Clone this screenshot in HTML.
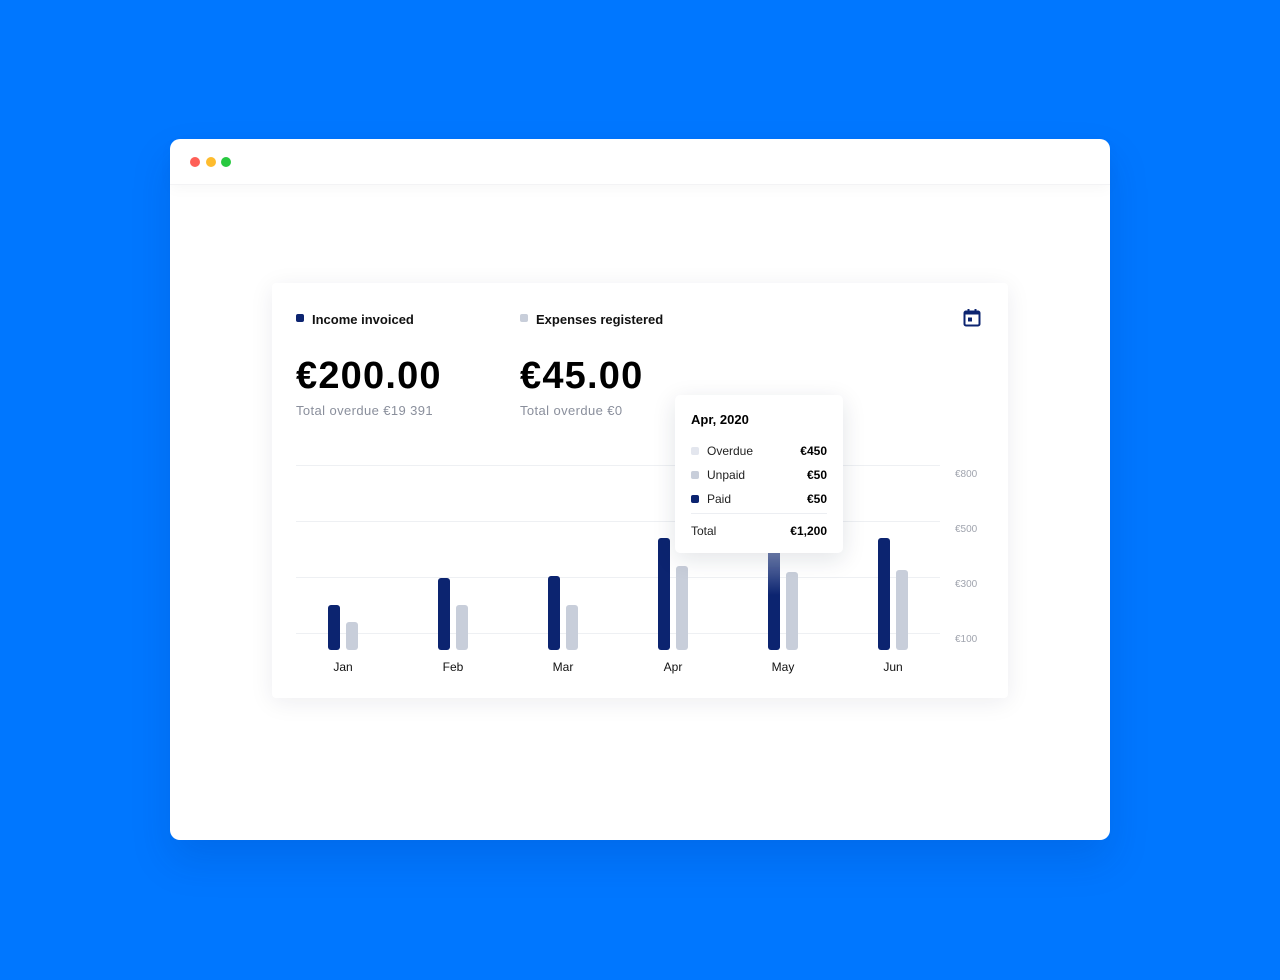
<!DOCTYPE html>
<html><head><style>
*{margin:0;padding:0;box-sizing:border-box}
body{width:1280px;height:980px;background:#0077ff;font-family:"Liberation Sans",sans-serif;position:relative;overflow:hidden}
.win{position:absolute;left:170px;top:139px;width:940px;height:701px;background:#fff;border-radius:10px;box-shadow:0 20px 40px rgba(0,40,120,.15)}
.hdr{position:absolute;left:0;top:0;width:940px;height:46px;border-bottom:1px solid #f3f3f5;box-shadow:0 4px 14px rgba(0,0,0,.03);border-radius:10px 10px 0 0}
.dot{position:absolute;top:18px;width:10px;height:10px;border-radius:50%}
.card{position:absolute;left:272px;top:283px;width:736px;height:415px;background:#fff;border-radius:4px;box-shadow:0 4px 24px rgba(20,30,60,.08)}
.abs{position:absolute}
.leg{font-size:13px;font-weight:bold;color:#111;top:312px}
.sq{position:absolute;width:8px;height:8px;border-radius:2px}
.big{font-size:38px;font-weight:bold;color:#000;top:355px;letter-spacing:1.2px}
.sub{font-size:13px;color:#8a8f9c;top:403px;letter-spacing:0.4px}
.grid{position:absolute;left:296px;width:644px;height:1px;background:#eef0f3}
.yl{position:absolute;left:955px;font-size:10px;color:#a0a4ae}
.bar{position:absolute;width:12px;border-radius:3px}
.d{background:#0c2470}.l{background:#c8ceda}
.m{position:absolute;top:660px;font-size:12px;color:#111;width:60px;text-align:center}
.tip{position:absolute;left:675px;top:395px;width:168px;height:158px;background:#fff;border-radius:5px;box-shadow:0 6px 24px rgba(20,30,60,.12);font-size:12px;color:#222}
.tr{position:absolute;left:16px;right:16px;height:14px}
.tr b{position:absolute;right:0;color:#000}
</style></head><body>
<div class="win"><div class="hdr">
<div class="dot" style="left:20px;background:#fe5f57"></div>
<div class="dot" style="left:36px;background:#febc2e"></div>
<div class="dot" style="left:51px;background:#28c940"></div>
</div></div>
<div class="card"></div>
<div class="sq" style="left:296px;top:314px;background:#0c2470"></div>
<div class="abs leg" style="left:312px">Income invoiced</div>
<div class="sq" style="left:520px;top:314px;background:#c8ceda"></div>
<div class="abs leg" style="left:536px">Expenses registered</div>
<svg class="abs" style="left:962px;top:308px" width="20" height="20" viewBox="0 0 20 20"><rect x="2.5" y="3.5" width="15" height="14" rx="1.5" fill="none" stroke="#0c2470" stroke-width="2"/><rect x="2.5" y="3.5" width="15" height="3" fill="#0c2470"/><rect x="5.5" y="1" width="2" height="4" fill="#0c2470"/><rect x="12.5" y="1" width="2" height="4" fill="#0c2470"/><rect x="6" y="9.5" width="4" height="4" fill="#0c2470"/></svg>
<div class="abs big" style="left:296px">€200.00</div>
<div class="abs big" style="left:520px">€45.00</div>
<div class="abs sub" style="left:296px">Total overdue €19 391</div>
<div class="abs sub" style="left:520px">Total overdue €0</div>
<div class="grid" style="top:465px"></div><div class="grid" style="top:521px"></div><div class="grid" style="top:577px"></div><div class="grid" style="top:633px"></div>
<div class="yl" style="top:469px">€800</div><div class="yl" style="top:524px">€500</div><div class="yl" style="top:579px">€300</div><div class="yl" style="top:634px">€100</div>
<div class="bar d" style="left:328px;top:605px;height:45px"></div><div class="bar l" style="left:346px;top:622px;height:28px"></div>
<div class="bar d" style="left:438px;top:578px;height:72px"></div><div class="bar l" style="left:456px;top:605px;height:45px"></div>
<div class="bar d" style="left:548px;top:576px;height:74px"></div><div class="bar l" style="left:566px;top:605px;height:45px"></div>
<div class="bar d" style="left:658px;top:538px;height:112px"></div><div class="bar l" style="left:676px;top:566px;height:84px"></div>
<div class="bar" style="left:768px;top:540px;height:110px;background:linear-gradient(#8a97bd,#0c2470 50%)"></div><div class="bar l" style="left:786px;top:572px;height:78px"></div>
<div class="bar d" style="left:878px;top:538px;height:112px"></div><div class="bar l" style="left:896px;top:570px;height:80px"></div>
<div class="m" style="left:313px">Jan</div><div class="m" style="left:423px">Feb</div><div class="m" style="left:533px">Mar</div><div class="m" style="left:643px">Apr</div><div class="m" style="left:753px">May</div><div class="m" style="left:863px">Jun</div>
<div class="tip">
<div class="abs" style="left:16px;top:17px;font-size:13px;font-weight:bold;color:#000">Apr, 2020</div>
<div class="tr" style="top:49px"><span class="sq" style="left:0;top:3px;background:#e3e6ee"></span><span style="position:absolute;left:16px">Overdue</span><b>€450</b></div>
<div class="tr" style="top:73px"><span class="sq" style="left:0;top:3px;background:#c8ceda"></span><span style="position:absolute;left:16px">Unpaid</span><b>€50</b></div>
<div class="tr" style="top:97px"><span class="sq" style="left:0;top:3px;background:#0c2470"></span><span style="position:absolute;left:16px">Paid</span><b>€50</b></div>
<div class="abs" style="left:16px;right:16px;top:118px;height:1px;background:#eceef2"></div>
<div class="tr" style="top:129px"><span style="position:absolute;left:0">Total</span><b>€1,200</b></div>
</div>
</body></html>
